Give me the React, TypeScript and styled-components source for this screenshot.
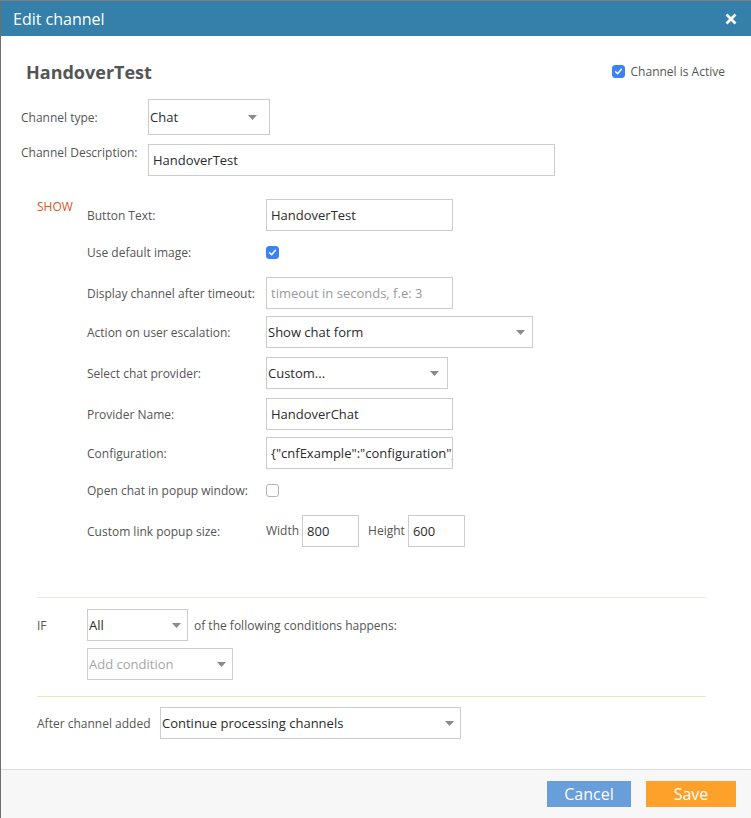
import React from 'react';
import styled, { createGlobalStyle } from 'styled-components';

const GlobalStyles = createGlobalStyle`
  html, body {
    margin: 0;
    padding: 0;
    background: #ffffff;
  }
  body {
    font-family: "Open Sans", "Liberation Sans", sans-serif;
  }
  * {
    box-sizing: border-box;
  }
`;

const Modal = styled.div`
  width: 751px;
  height: 818px;
  display: flex;
  flex-direction: column;
  background: #ffffff;
  border-top: 1px solid #7d7d7d;
  border-left: 1px solid #6e6e6e;
`;

const Header = styled.div`
  flex: none;
  height: 35px;
  display: flex;
  align-items: center;
  justify-content: space-between;
  padding: 0 14px 0 12px;
  background: #3480ab;
  color: #ffffff;
`;

const HeaderTitle = styled.h1`
  margin: 0;
  font-size: 16px;
  font-weight: 400;
  line-height: 22px;
`;

const CloseButton = styled.button`
  display: flex;
  width: 12px;
  height: 12px;
  padding: 0;
  border: 0;
  background: none;
  cursor: pointer;
`;

const Body = styled.div`
  flex: 1;
  padding: 24px 0 0 20px;
`;

const TitleRow = styled.div`
  display: flex;
  align-items: center;
  justify-content: space-between;
  margin: 0 26px 0 5px;
  height: 25px;
`;

const ChannelName = styled.h2`
  margin: 0;
  font-size: 18px;
  font-weight: 700;
  line-height: 25px;
  color: #555555;
`;

const CheckLabel = styled.label`
  display: flex;
  align-items: center;
  gap: 6px;
  margin-top: -2px;
  font-size: 12px;
  color: #555555;
`;

const Box = styled.span<{ $checked?: boolean }>`
  display: inline-flex;
  align-items: center;
  justify-content: center;
  width: 13px;
  height: 13px;
  border-radius: 3px;
  background: ${(p) => (p.$checked ? '#3b82f6' : '#ffffff')};
  border: 1px solid ${(p) => (p.$checked ? '#3b82f6' : '#b3b3b3')};
`;

const FieldRow = styled.div<{ $mt: number; $ml?: number; $align?: string }>`
  display: flex;
  align-items: ${(p) => p.$align || 'center'};
  margin: ${(p) => p.$mt}px 0 0 ${(p) => p.$ml || 0}px;
`;

const FieldLabel = styled.div<{ $w: number }>`
  flex: none;
  width: ${(p) => p.$w}px;
  font-size: 12px;
  line-height: 17px;
  color: #555555;
`;

const TextInput = styled.input<{ $w: number }>`
  width: ${(p) => p.$w}px;
  height: 32px;
  padding: 0 0 0 4px;
  border: 1px solid #cccccc;
  border-radius: 0;
  font-family: inherit;
  font-size: 13px;
  color: #2b2b2b;
  background: #ffffff;
  outline: none;

  &::placeholder {
    color: #9a9a9a;
  }
`;

const SelectBox = styled.div<{ $w: number; $h?: number; $pr?: number; $muted?: boolean }>`
  display: flex;
  align-items: center;
  justify-content: space-between;
  width: ${(p) => p.$w}px;
  height: ${(p) => p.$h || 32}px;
  padding: 0 ${(p) => p.$pr || 7}px 0 1px;
  border: 1px solid #cccccc;
  background: #ffffff;
  font-size: 13px;
  color: ${(p) => (p.$muted ? '#a6a6a6' : '#2b2b2b')};
`;

const Section = styled.div`
  display: flex;
  margin: 23px 0 0 16px;
`;

const SectionTag = styled.div`
  flex: none;
  width: 50px;
  font-size: 12px;
  line-height: 16px;
  color: #e0531d;
`;

const SectionRows = styled.div`
  display: flex;
  flex-direction: column;
`;

const ShowRow = styled.div<{ $mt: number }>`
  display: flex;
  align-items: center;
  height: 32px;
  margin-top: ${(p) => p.$mt}px;
`;

const InlineText = styled.span<{ $ml?: number }>`
  font-size: 12px;
  color: #555555;
  margin: -2px 3px 0 ${(p) => p.$ml || 0}px;
`;

const Divider = styled.div<{ $mt: number; $color: string }>`
  height: 1px;
  margin: ${(p) => p.$mt}px 45px 0 16px;
  background: ${(p) => p.$color};
`;

const ConditionBlock = styled.div`
  display: flex;
  margin: 11px 0 0 16px;
`;

const ConditionTag = styled.div`
  flex: none;
  width: 50px;
  height: 32px;
  display: flex;
  align-items: center;
  font-size: 12px;
  color: #555555;
`;

const ConditionRows = styled.div`
  display: flex;
  flex-direction: column;
  gap: 7px;
`;

const ConditionLine = styled.div`
  display: flex;
  align-items: center;
  gap: 6px;
  font-size: 12px;
  color: #555555;
`;

const Footer = styled.div`
  flex: none;
  height: 49px;
  display: flex;
  justify-content: flex-end;
  gap: 15px;
  padding: 11px 15px 0 0;
  border-top: 1px solid #dddddd;
  background: #f7f7f7;
`;

const FooterButton = styled.button<{ $bg: string; $w: number }>`
  width: ${(p) => p.$w}px;
  height: 26px;
  padding: 0;
  border: 0;
  background: ${(p) => p.$bg};
  color: #ffffff;
  font-family: inherit;
  font-size: 16px;
  line-height: 26px;
  cursor: pointer;
`;

function Arrow() {
  return (
    <svg width="9" height="5" viewBox="0 0 9 5">
      <path d="M0 0 L9 0 L4.5 5 Z" fill="#8a8a8a" />
    </svg>
  );
}

function Check({ checked }: { checked?: boolean }) {
  return (
    <Box $checked={checked}>
      {checked ? (
        <svg width="9" height="9" viewBox="0 0 9 9">
          <path d="M1.6 4.7 L3.6 6.7 L7.4 2.3" stroke="#ffffff" strokeWidth="1.5" fill="none" strokeLinecap="round" strokeLinejoin="round" />
        </svg>
      ) : null}
    </Box>
  );
}

function Select({ value, width, height, pr, muted }: { value: string; width: number; height?: number; pr?: number; muted?: boolean }) {
  return (
    <SelectBox $w={width} $h={height} $pr={pr} $muted={muted}>
      <span>{value}</span>
      <Arrow />
    </SelectBox>
  );
}

export default function App() {
  return (
    <>
      <GlobalStyles />
      <Modal>
        <Header>
          <HeaderTitle>Edit channel</HeaderTitle>
          <CloseButton aria-label="Close">
            <svg width="12" height="12" viewBox="0 0 12 12">
              <path d="M1.5 1.5 L10.5 10.5 M10.5 1.5 L1.5 10.5" stroke="#ffffff" strokeWidth="2.6" />
            </svg>
          </CloseButton>
        </Header>

        <Body>
          <TitleRow>
            <ChannelName>HandoverTest</ChannelName>
            <CheckLabel>
              <Check checked />
              Channel is Active
            </CheckLabel>
          </TitleRow>

          <FieldRow $mt={14}>
            <FieldLabel $w={127}>Channel type:</FieldLabel>
            <Select value="Chat" width={122} height={36} pr={12} />
          </FieldRow>
          <FieldRow $mt={9} $align="flex-start">
            <FieldLabel $w={127}>Channel Description:</FieldLabel>
            <TextInput $w={407} readOnly value="HandoverTest" />
          </FieldRow>

          <Section>
            <SectionTag>SHOW</SectionTag>
            <SectionRows>
              <ShowRow $mt={0}>
                <FieldLabel $w={179}>Button Text:</FieldLabel>
                <TextInput $w={187} readOnly value="HandoverTest" />
              </ShowRow>
              <ShowRow $mt={5}>
                <FieldLabel $w={179}>Use default image:</FieldLabel>
                <Check checked />
              </ShowRow>
              <ShowRow $mt={9}>
                <FieldLabel $w={179}>Display channel after timeout:</FieldLabel>
                <TextInput $w={187} readOnly placeholder="timeout in seconds, f.e: 3" />
              </ShowRow>
              <ShowRow $mt={7}>
                <FieldLabel $w={179}>Action on user escalation:</FieldLabel>
                <Select value="Show chat form" width={267} />
              </ShowRow>
              <ShowRow $mt={9}>
                <FieldLabel $w={179}>Select chat provider:</FieldLabel>
                <Select value="Custom..." width={182} pr={8} />
              </ShowRow>
              <ShowRow $mt={9}>
                <FieldLabel $w={179}>Provider Name:</FieldLabel>
                <TextInput $w={187} readOnly value="HandoverChat" />
              </ShowRow>
              <ShowRow $mt={7}>
                <FieldLabel $w={179}>Configuration:</FieldLabel>
                <TextInput $w={187} readOnly value={'{"cnfExample":"configuration"}'} />
              </ShowRow>
              <ShowRow $mt={5}>
                <FieldLabel $w={179}>Open chat in popup window:</FieldLabel>
                <Check />
              </ShowRow>
              <ShowRow $mt={9}>
                <FieldLabel $w={179}>Custom link popup size:</FieldLabel>
                <InlineText>Width</InlineText>
                <TextInput $w={57} readOnly value="800" />
                <InlineText $ml={9}>Height</InlineText>
                <TextInput $w={57} readOnly value="600" />
              </ShowRow>
            </SectionRows>
          </Section>

          <Divider $mt={50} $color="#ebe5d9" />

          <ConditionBlock>
            <ConditionTag>IF</ConditionTag>
            <ConditionRows>
              <ConditionLine>
                <Select value="All" width={101} pr={6} />
                <span>of the following conditions happens:</span>
              </ConditionLine>
              <Select value="Add condition" width={146} pr={6} muted />
            </ConditionRows>
          </ConditionBlock>

          <Divider $mt={16} $color="#f7e1b6" />

          <FieldRow $mt={10} $ml={16}>
            <FieldLabel $w={123}>After channel added</FieldLabel>
            <Select value="Continue processing channels" width={301} pr={6} />
          </FieldRow>
        </Body>

        <Footer>
          <FooterButton $bg="#689ed9" $w={84}>Cancel</FooterButton>
          <FooterButton $bg="#fea12b" $w={90}>Save</FooterButton>
        </Footer>
      </Modal>
    </>
  );
}
